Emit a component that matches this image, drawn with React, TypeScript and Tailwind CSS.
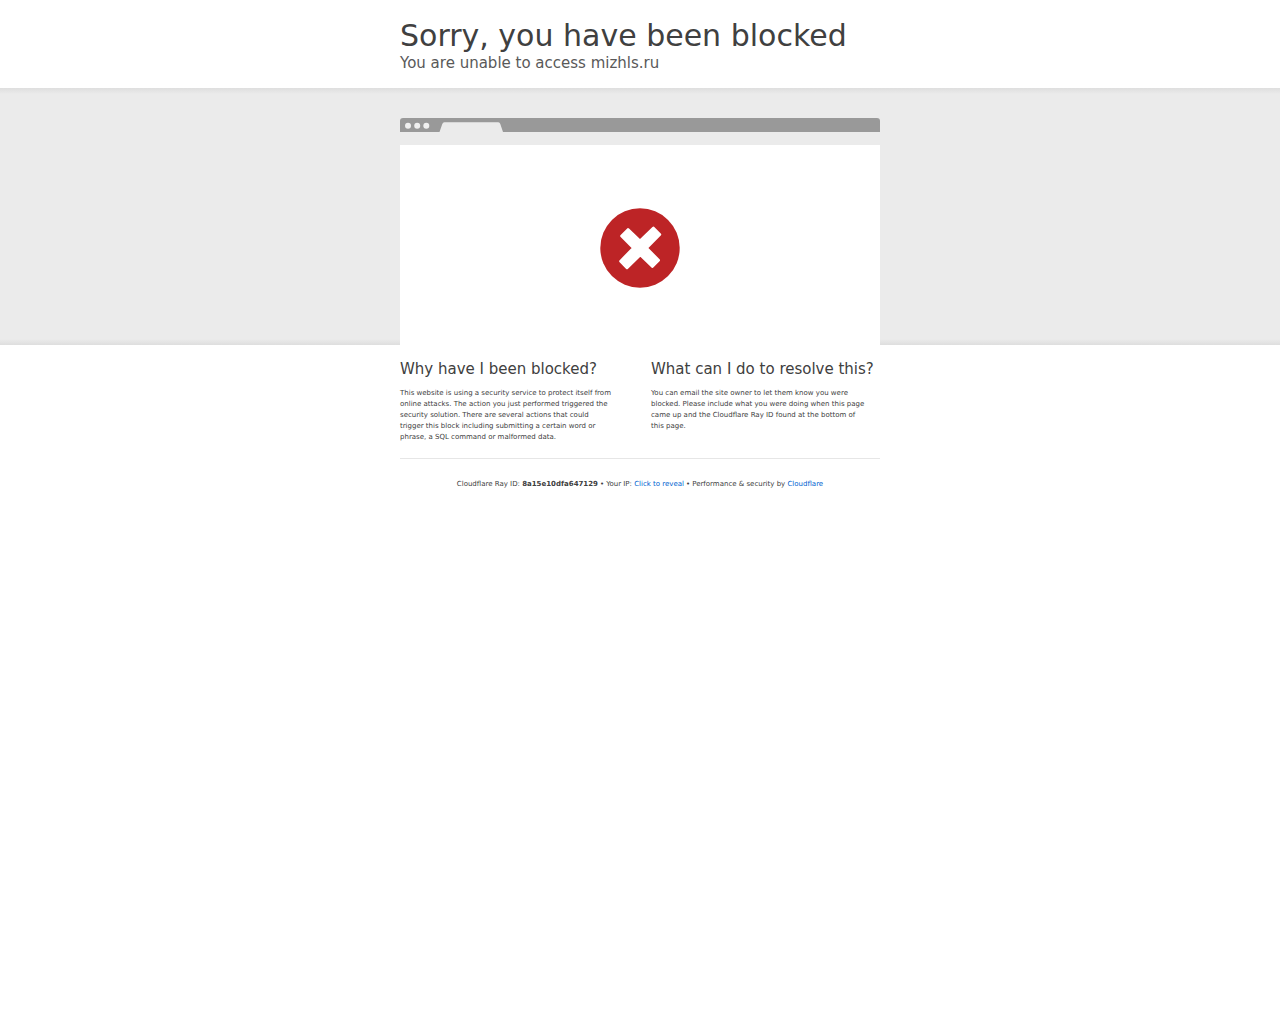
import React from 'react';

const BrowserBar: React.FC = () => (
  <svg className="block w-full" viewBox="0 0 480 27" aria-hidden="true">
    <path d="M0 14V3a3 3 0 0 1 3-3h474a3 3 0 0 1 3 3v11z" fill="#999" />
    <path d="M0 14h480v13H0z" fill="#ebebeb" />
    <path d="M39.500 14l2.800-8q.6-1.700 2-1.700h54q1.500 0 2 1.700l2.700 8z" fill="#ebebeb" />
    <circle cx="8" cy="7.700" r="3" fill="#f0f0f0" />
    <circle cx="17.200" cy="7.700" r="3" fill="#f0f0f0" />
    <circle cx="26.300" cy="7.700" r="3" fill="#f0f0f0" />
  </svg>
);

const ErrorIcon: React.FC = () => (
  <svg className="h-20 w-20" viewBox="0 0 80 80" aria-hidden="true">
    <circle cx="40" cy="40" r="39.700" fill="#bd2426" />
    <path
      d="M28 21.700L40 33.200 53.500 20.200 59.700 26.500 46.400 40 58.500 52.300 52.500 58.300 40.300 46.600 27 59.700 20.700 53.200 33.600 40 21.700 28z"
      fill="#fff"
      stroke="#fff"
      strokeWidth="3"
      strokeLinejoin="round"
    />
  </svg>
);

export default function App() {
  return (
    <div className="min-h-screen bg-white font-['DejaVu_Sans',sans-serif] text-[#404040]">
      <header className="mx-auto max-w-[480px] py-4">
        <h1 className="text-[30px] leading-[39px]">Sorry, you have been blocked</h1>
        <h2 className="text-[15px] leading-[17px] text-[#595959]">You are unable to access mizhls.ru</h2>
      </header>

      <section className="bg-[linear-gradient(#dedede,#ebebeb_6px,#ebebeb_calc(100%-6px),#dedede)] pt-[30px]">
        <div className="mx-auto max-w-[480px]">
          <BrowserBar />
          <div className="flex h-50 items-center justify-center bg-white pt-1.5">
            <ErrorIcon />
          </div>
        </div>
      </section>

      <main className="mx-auto max-w-[480px]">
        <div className="grid gap-[22px] border-b border-[#e6e6e6] py-[15px] sm:grid-cols-2">
          <section>
            <h2 className="mb-[9px] text-[15px] leading-[19px]">Why have I been blocked?</h2>
            <p className="max-w-[213px] text-[7px] leading-[11px]">
              This website is using a security service to protect itself from online attacks. The action you just
              performed triggered the security solution. There are several actions that could trigger this block
              including submitting a certain word or phrase, a SQL command or malformed data.
            </p>
          </section>
          <section>
            <h2 className="mb-[9px] text-[15px] leading-[19px]">What can I do to resolve this?</h2>
            <p className="max-w-[217px] text-[7px] leading-[11px]">
              You can email the site owner to let them know you were blocked. Please include what you were doing when
              this page came up and the Cloudflare Ray ID found at the bottom of this page.
            </p>
          </section>
        </div>
      </main>

      <footer className="mx-auto flex max-w-[480px] flex-wrap justify-center gap-x-0.5 py-5 text-[7px] leading-[10px]">
        <span>Cloudflare Ray ID: <strong>8a15e10dfa647129</strong></span>
        <span>•</span>
        <span>Your IP: <button type="button" className="text-[#005fd0]">Click to reveal</button></span>
        <span>•</span>
        <span>Performance &amp; security by <a href="https://www.cloudflare.com" className="text-[#005fd0]">Cloudflare</a></span>
      </footer>
    </div>
  );
}
